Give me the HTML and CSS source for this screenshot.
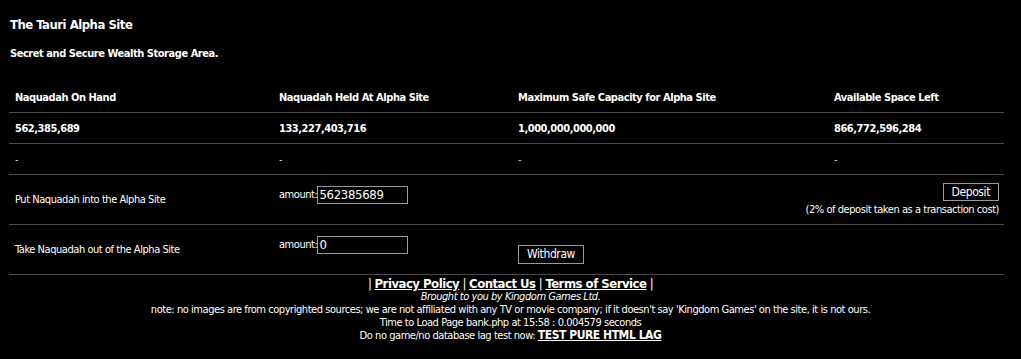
FILE: index.html
```html
<!DOCTYPE html>
<html>
<head>
<meta charset="utf-8">
<title>The Tauri Alpha Site</title>
<link rel="stylesheet" href="styles.css">
</head>
<body>
<div class="page">
  <h1 class="title">The Tauri Alpha Site</h1>
  <h2 class="subtitle">Secret and Secure Wealth Storage Area.</h2>
  <table class="bank">
    <tr class="head">
      <th class="c1">Naquadah On Hand</th>
      <th class="c2">Naquadah Held At Alpha Site</th>
      <th class="c3">Maximum Safe Capacity for Alpha Site</th>
      <th class="c4">Available Space Left</th>
    </tr>
    <tr class="nums">
      <td>562,385,689</td>
      <td>133,227,403,716</td>
      <td>1,000,000,000,000</td>
      <td>866,772,596,284</td>
    </tr>
    <tr class="dash">
      <td>-</td>
      <td>-</td>
      <td>-</td>
      <td>-</td>
    </tr>
    <tr class="action">
      <td>Put Naquadah into the Alpha Site</td>
      <td class="amount">amount:<input class="field" type="text" value="562385689"></td>
      <td colspan="2" class="deposit">
        <button class="btn">Deposit</button><br>
        (2% of deposit taken as a transaction cost)
      </td>
    </tr>
    <tr class="action">
      <td>Take Naquadah out of the Alpha Site</td>
      <td class="amount">amount:<input class="field" type="text" value="0"></td>
      <td class="withdraw"><button class="btn">Withdraw</button></td>
      <td></td>
    </tr>
  </table>
  <div class="footer">
    <div class="links">| <a href="#">Privacy Policy</a> | <a href="#">Contact Us</a> | <a href="#">Terms of Service</a> |</div>
    <div class="brought">Brought to you by Kingdom Games Ltd.</div>
    <div>note: no images are from copyrighted sources; we are not affiliated with any TV or movie company; if it doesn't say 'Kingdom Games' on the site, it is not ours.</div>
    <div>Time to Load Page bank.php at 15:58 : 0.004579 seconds</div>
    <div>Do no game/no database lag test now: <a class="lag" href="#">TEST PURE HTML LAG</a></div>
  </div>
</div>
</body>
</html>
```

FILE: styles.css
```css
html, body {
  margin: 0;
  background: #000;
  color: #fff;
  font-family: "DejaVu Sans Condensed", "DejaVu Sans", Verdana, sans-serif;
  font-size: 11px;
  letter-spacing: -0.45px;
}

.page {
  padding: 17px 9px 0 9px;
}

.title {
  font-size: 13px;
  font-weight: bold;
  line-height: 16px;
  margin: 0 0 14px 1px;
  letter-spacing: -0.5px;
}

.subtitle {
  font-size: 11px;
  font-weight: bold;
  line-height: 14px;
  margin: 0 0 21px 1px;
}

.bank {
  width: 995px;
  border-collapse: collapse;
}

.bank th,
.bank td {
  text-align: left;
  padding: 0 6px;
  border-bottom: 1px solid #4a4a4a;
  vertical-align: middle;
}

.bank th {
  font-weight: bold;
  height: 30px;
}

.c1 { width: 252px; }
.c2 { width: 227px; }
.c3 { width: 304px; }

.nums td {
  font-weight: bold;
  height: 30px;
}

.dash td {
  height: 30px;
  color: #ccc;
}

.action td {
  height: 49px;
}

.action td.amount {
  height: 39px;
  padding-bottom: 10px;
}

.field {
  width: 91px;
  height: 18px;
  box-sizing: border-box;
  margin: 0;
  padding: 0 1px;
  background: #000;
  color: #fff;
  border: 1px solid #999;
  font-family: inherit;
  font-size: 13px;
  letter-spacing: -0.3px;
  vertical-align: middle;
}

.action td.deposit {
  text-align: right;
  padding-right: 5px;
  line-height: 14px;
}

.btn {
  background: #000;
  color: #fff;
  border: 1px solid #999;
  font-family: inherit;
  font-size: 12px;
  letter-spacing: -0.4px;
  padding: 0 8px;
  height: 18px;
  margin: 0 0 2px 0;
  cursor: pointer;
  vertical-align: top;
}

.withdraw .btn {
  height: 19px;
}

.action td.withdraw {
  height: 38px;
  padding-top: 11px;
}

.footer {
  text-align: center;
  line-height: 13px;
  padding-top: 1px;
}

.footer a {
  color: #fff;
  font-weight: bold;
}

.links {
  font-size: 13px;
  line-height: 15px;
  letter-spacing: -0.5px;
}

.brought {
  font-style: italic;
  line-height: 12px;
}

.lag {
  font-size: 12px;
}
```
